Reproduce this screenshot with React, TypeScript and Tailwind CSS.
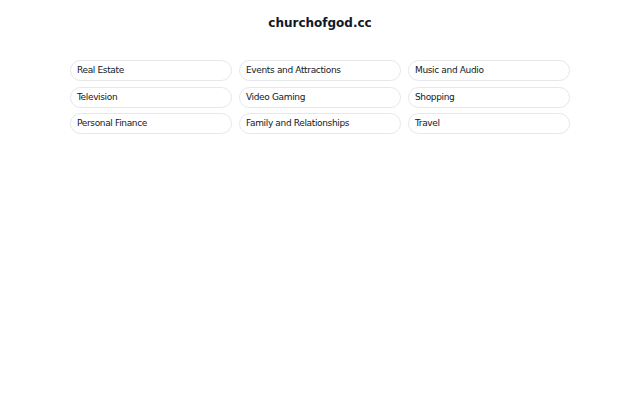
const topics = [
  'Real Estate',
  'Events and Attractions',
  'Music and Audio',
  'Television',
  'Video Gaming',
  'Shopping',
  'Personal Finance',
  'Family and Relationships',
  'Travel',
]

export default function App() {
  return (
    <div
      className="min-h-[400px] w-full bg-white flex flex-col items-center"
      style={{ fontFamily: '"DejaVu Sans", Verdana, sans-serif' }}
    >
      <h1 className="mt-[15px] text-[12px] leading-[16px] font-bold text-[#111827]">churchofgod.cc</h1>
      <div className="mt-[29px] w-[500px] grid grid-cols-3 gap-x-[7px] gap-y-[5.5px]">
        {topics.map((t) => (
          <a
            key={t}
            href="#"
            className="h-[21px] flex items-center pl-[6px] pt-px rounded-full border border-gray-200 text-[9px] tracking-[-0.35px] text-[#111827]"
          >
            {t}
          </a>
        ))}
      </div>
    </div>
  )
}
